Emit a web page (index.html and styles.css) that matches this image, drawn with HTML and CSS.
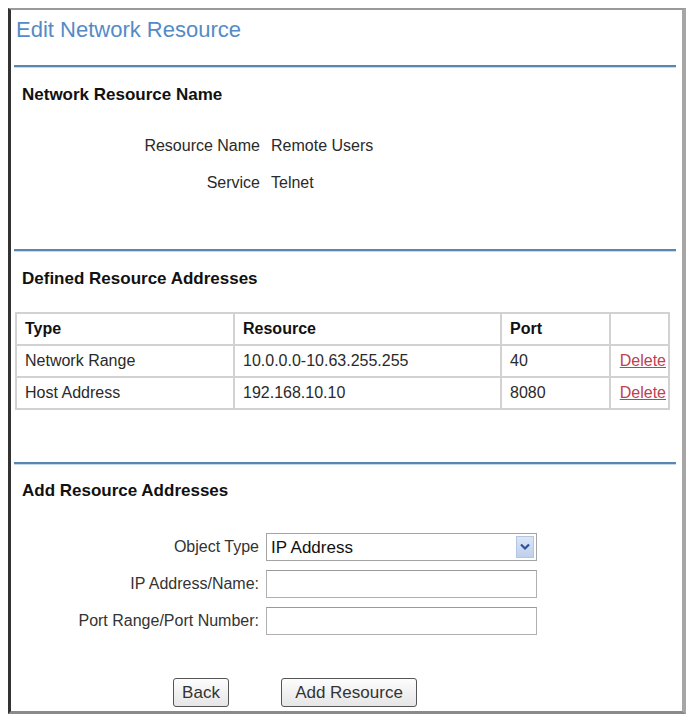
FILE: index.html
```html
<!DOCTYPE html>
<html lang="en">

<head>
    <meta charset="UTF-8">
    <meta name="viewport" content="width=device-width, initial-scale=1.0">
    <title>Edit Network Resource</title>
    <link rel="stylesheet" href="styles.css">
</head>

<body>
    <div class="panel">
        <h1 class="title">Edit Network Resource</h1>
        <div class="rule"></div>

        <section class="section first">
            <h2>Network Resource Name</h2>
            <div class="info">
                <span class="label">Resource Name</span>
                <span class="value">Remote Users</span>
                <span class="label">Service</span>
                <span class="value">Telnet</span>
            </div>
        </section>
        <div class="rule"></div>

        <section class="section second">
            <h2>Defined Resource Addresses</h2>
            <table class="addresses">
                <tr>
                    <th class="col-type">Type</th>
                    <th class="col-res">Resource</th>
                    <th class="col-port">Port</th>
                    <th class="col-del"></th>
                </tr>
                <tr>
                    <td>Network Range</td>
                    <td>10.0.0.0-10.63.255.255</td>
                    <td>40</td>
                    <td class="del"><a href="#">Delete</a></td>
                </tr>
                <tr>
                    <td>Host Address</td>
                    <td>192.168.10.10</td>
                    <td>8080</td>
                    <td class="del"><a href="#">Delete</a></td>
                </tr>
            </table>
        </section>
        <div class="rule"></div>

        <section class="section third">
            <h2>Add Resource Addresses</h2>
            <form class="add-form">
                <label for="objType">Object Type</label>
                <div class="select-box">
                    <select id="objType">
                        <option>IP Address</option>
                        <option>IP Network</option>
                    </select>
                    <span class="arrow">
                        <svg width="10" height="8" viewBox="0 0 10 8">
                            <path d="M1 1.5 L5 5.5 L9 1.5" fill="none" stroke="#2c4f9e" stroke-width="2.2" />
                        </svg>
                    </span>
                </div>
                <label for="ipName">IP Address/Name:</label>
                <input type="text" id="ipName">
                <label for="portNum">Port Range/Port Number:</label>
                <input type="text" id="portNum">
            </form>
            <div class="buttons">
                <button type="button" class="btn back">Back</button>
                <button type="button" class="btn add">Add Resource</button>
            </div>
        </section>
    </div>
</body>

</html>
```

FILE: styles.css
```css
* {
    box-sizing: border-box;
}

body {
    margin: 0;
    padding: 8px 0 0 8px;
    background: #fff;
    font-family: "Liberation Sans", Arial, sans-serif;
    color: #2a2a2a;
}

.panel {
    width: 678px;
    height: 706px;
    border-left: 3px solid #333;
    border-top: 2px solid #9a9a9a;
    border-right: 4px solid #a6a6a6;
    border-bottom: 3px solid #8a8a8a;
    padding: 0 6px 0 3px;
    display: flex;
    flex-direction: column;
}

.title {
    margin: 0;
    height: 55px;
    padding: 7px 0 0 2px;
    font-size: 22px;
    line-height: 26px;
    font-weight: normal;
    color: #548bc6;
}

.rule {
    height: 2px;
    background: #5a86b2;
    box-shadow: 0 1px 0 #c6d8ea;
}

.section h2 {
    margin: 0;
    padding-left: 8px;
    font-size: 17px;
    line-height: 20px;
    font-weight: bold;
    color: #111;
}

.first {
    height: 182px;
    padding-top: 18px;
}

.info {
    display: grid;
    grid-template-columns: 246px auto;
    column-gap: 11px;
    row-gap: 17px;
    margin-top: 31px;
    font-size: 16px;
    line-height: 20px;
}

.info .label {
    text-align: right;
}

.second {
    height: 211px;
    padding-top: 18px;
}

.addresses {
    margin: 23px 0 0 1px;
    width: 655px;
    border-collapse: collapse;
    font-size: 16px;
}

.addresses th,
.addresses td {
    height: 32px;
    border: 2px solid #d2d2d2;
    padding: 0 8px;
    text-align: left;
}

.addresses th {
    font-weight: bold;
    color: #111;
}

.col-type {
    width: 218px;
}

.col-res {
    width: 267px;
}

.col-port {
    width: 109px;
}

.addresses td.del {
    text-align: right;
    padding-right: 2px;
}

.del a {
    color: #c0404e;
}

.third {
    flex: 1;
    padding-top: 17px;
}

.add-form {
    display: grid;
    grid-template-columns: 245px 271px;
    column-gap: 7px;
    row-gap: 9px;
    margin-top: 32px;
    align-items: center;
    font-size: 16px;
}

.add-form label {
    text-align: right;
    color: #333;
}

.select-box {
    display: flex;
    height: 28px;
    border: 1px solid #a4a4a4;
    background: #fff;
    padding: 2px;
}

.select-box select {
    flex: 1;
    appearance: none;
    -webkit-appearance: none;
    border: none;
    outline: none;
    background: transparent;
    font-family: inherit;
    font-size: 17px;
    color: #111;
    padding: 0 2px;
}

.arrow {
    width: 18px;
    display: flex;
    align-items: center;
    justify-content: center;
    background: linear-gradient(#dbe6f7, #bfd0ec);
    border: 1px solid #b5c6e2;
}

.add-form input {
    height: 28px;
    border: 1px solid #b0b0b0;
    border-top-color: #999;
    outline: none;
    background: #fff;
}

.buttons {
    display: flex;
    gap: 52px;
    margin: 43px 0 0 159px;
}

.btn {
    height: 29px;
    border: 1px solid #555;
    border-radius: 3px;
    background: linear-gradient(#fdfdfd, #e6e6e6);
    font-family: inherit;
    font-size: 17px;
    color: #333;
    padding: 0;
}

.back {
    width: 56px;
}

.add {
    width: 136px;
}
```
